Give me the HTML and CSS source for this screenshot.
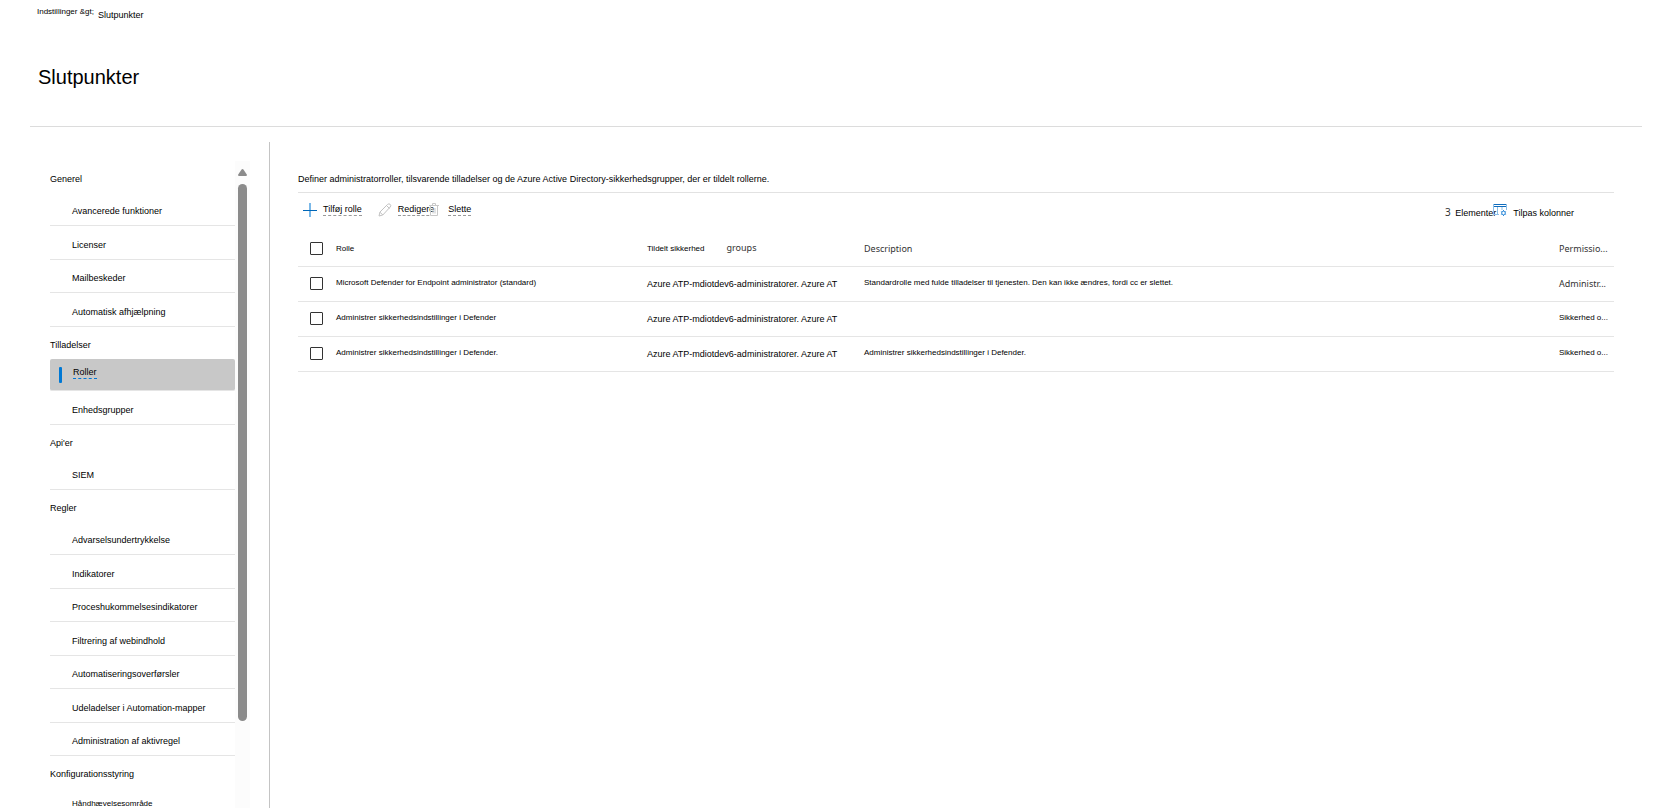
FILE: index.html
```html
<!DOCTYPE html>
<html lang="da">
<head>
    <meta charset="UTF-8">
    <meta name="viewport" content="width=device-width, initial-scale=1.0">
    <title>Slutpunkter</title>
    <link rel="stylesheet" href="styles.css">
</head>
<body>
<header>
    <nav class="breadcrumb">
        <a href="#" class="small">Indstillinger &amp;gt;</a>
        <a href="#">Slutpunkter</a>
    </nav>
    <h1>Slutpunkter</h1>
</header>

<div class="layout">
    <aside>
        <nav class="menu">
            <h2>Generel</h2>
            <ul>
                <li><a href="#">Avancerede funktioner</a></li>
                <li><a href="#">Licenser</a></li>
                <li><a href="#">Mailbeskeder</a></li>
                <li><a href="#">Automatisk afhjælpning</a></li>
            </ul>
            <h2>Tilladelser</h2>
            <ul>
                <li class="active"><a href="#"><span>Roller</span></a></li>
                <li><a href="#">Enhedsgrupper</a></li>
            </ul>
            <h2>Api'er</h2>
            <ul>
                <li><a href="#">SIEM</a></li>
            </ul>
            <h2>Regler</h2>
            <ul>
                <li><a href="#">Advarselsundertrykkelse</a></li>
                <li><a href="#">Indikatorer</a></li>
                <li><a href="#">Proceshukommelsesindikatorer</a></li>
                <li><a href="#">Filtrering af webindhold</a></li>
                <li><a href="#">Automatiseringsoverførsler</a></li>
                <li><a href="#">Udeladelser i Automation-mapper</a></li>
                <li><a href="#">Administration af aktivregel</a></li>
            </ul>
            <h2>Konfigurationsstyring</h2>
            <ul>
                <li class="last"><a href="#" class="small">Håndhævelsesområde</a></li>
            </ul>
        </nav>
        <div class="scrollbar">
            <svg width="9" height="7" viewBox="0 0 9 7"><path d="M3.4 .8Q4.5-.6 5.6.8L8.8 5.6Q9.2 7 8 7H1Q-.2 7 .2 5.6Z" fill="#8b8b8b"/></svg>
            <div class="thumb"></div>
        </div>
    </aside>

    <main>
        <p class="intro">Definer administratorroller, tilsvarende tilladelser og de Azure Active Directory-sikkerhedsgrupper, der er tildelt rollerne.</p>

        <div class="toolbar">
            <button type="button" class="add">
                <svg width="14" height="14" viewBox="0 0 14 14"><path d="M7 0v14" stroke="#7ab8e8" stroke-width="2"/><path d="M0 7.500h14" stroke="#0067b8"/></svg>
                <span>Tilføj rolle</span>
            </button>
            <button type="button" class="edit">
                <svg width="14" height="14" viewBox="0 0 14 14" fill="none" stroke="#c2c2c2"><path d="M1 13l1-4 7.600-7.600q1.400-1.200 2.600 0t0 2.600L4.800 12ZM8.500 2.500l3 3M2 9.200l2.800 2.800"/></svg>
                <span>Redigere</span>
            </button>
            <button type="button" class="delete">
                <svg width="10" height="14" viewBox="0 0 10 14" fill="none" stroke="#c8c8c8"><path d="M0 2.500h10M3.500 2.500v-2h3v2M1.500 2.500v10h7v-10M4 5v5.500M6 5v5.500"/></svg>
                <span>Slette</span>
            </button>
            <div class="count"><span class="num">3</span> Elementer</div>
            <button type="button" class="columns">
                <svg width="14" height="13" viewBox="0 0 14 13" fill="none" stroke="#2b88d8"><path d="M0 .5h14M0 2.500h14" stroke="#0f6cbd"/><path d="M.5 0v11M13.500 0v6M4.500 3v8M9 3v3M0 10.500h6" stroke="#8cbfe8"/><circle cx="10.500" cy="9" r="1.800"/><path d="M10.500 6v1M10.500 11v1M7.900 7.500l.9.500M12.200 10l.9.500M7.900 10.500l.9-.5M12.200 8l.9-.5"/></svg>
                <span>Tilpas kolonner</span>
            </button>
        </div>

        <table>
            <thead>
                <tr>
                    <th class="check"><input type="checkbox" aria-label="Vælg alle"></th>
                    <th class="role small">Rolle</th>
                    <th class="groups"><span class="small">Tildelt sikkerhed</span><span class="noto">groups</span></th>
                    <th class="noto">Description</th>
                    <th class="perm noto">Permissio...</th>
                </tr>
            </thead>
            <tbody>
                <tr>
                    <td><input type="checkbox" aria-label="Vælg rolle 1"></td>
                    <td class="small">Microsoft Defender for Endpoint administrator (standard)</td>
                    <td>Azure ATP-mdiotdev6-administratorer. Azure AT</td>
                    <td class="small">Standardrolle med fulde tilladelser til tjenesten. Den kan ikke ændres, fordi cc er slettet.</td>
                    <td class="noto">Administr...</td>
                </tr>
                <tr>
                    <td><input type="checkbox" aria-label="Vælg rolle 2"></td>
                    <td class="small">Administrer sikkerhedsindstillinger i Defender</td>
                    <td>Azure ATP-mdiotdev6-administratorer. Azure AT</td>
                    <td></td>
                    <td class="small">Sikkerhed o...</td>
                </tr>
                <tr>
                    <td><input type="checkbox" aria-label="Vælg rolle 3"></td>
                    <td class="small">Administrer sikkerhedsindstillinger i Defender.</td>
                    <td>Azure ATP-mdiotdev6-administratorer. Azure AT</td>
                    <td class="small">Administrer sikkerhedsindstillinger i Defender.</td>
                    <td class="small">Sikkerhed o...</td>
                </tr>
            </tbody>
        </table>
    </main>
</div>
</body>
</html>
```
FILE: styles.css
```css
* {
    box-sizing: border-box;
}
body {
    margin: 0;
    height: 100vh;
    display: flex;
    flex-direction: column;
    overflow: hidden;
    background: white;
    color: black;
    font-family: "Liberation Sans", Arial, sans-serif;
    font-size: 9px;
    line-height: 12px;
}
a {
    color: inherit;
    text-decoration: none;
}
.small {
    font-size: 8px;
}
.noto {
    font-family: "Noto Sans", sans-serif;
    font-size: 9px;
    color: #333;
}
header {
    margin: 0 19px 0 30px;
    padding: 6px 8px 36px 7px;
    border-bottom: 1px solid #dcdcdc;
}
.breadcrumb {
    display: flex;
    gap: 4px;
}
.breadcrumb a:last-child {
    margin-top: 3px;
}
h1 {
    margin: 43px 0 0 1px;
    font-size: 20px;
    font-weight: normal;
    line-height: 26px;
}
.layout {
    flex: 1;
    display: flex;
    min-height: 0;
    padding-top: 15px;
}

/* left menu */
aside {
    display: flex;
    width: 270px;
    padding: 19px 19px 0 50px;
    border-right: 1px solid #c4c4c4;
    overflow: hidden;
}
.menu {
    flex: 1;
}
.menu h2 {
    margin: 0;
    padding: 12px 0 8px;
    font-size: 9px;
    font-weight: normal;
}
.menu ul {
    margin: 0;
    padding: 0;
    list-style: none;
}
.menu li {
    border-bottom: 1px solid #e5e5e5;
}
.menu li a {
    display: block;
    padding: 12px 0 8px 22px;
}
.menu li:nth-child(even) a {
    padding-top: 13px;
}
.menu .active {
    background: #c8c8c8;
    border-radius: 2px;
}
.menu .active a {
    display: flex;
    align-items: flex-start;
    gap: 11px;
    padding: 8px 0 7px 9px;
}
.active a::before {
    content: "";
    width: 3px;
    height: 16px;
    background: #0078d4;
    border-radius: 1px;
}
.active span {
    line-height: 11px;
    border-bottom: 1px dashed #0078d4;
}
.menu .last a {
    padding-top: 10px;
}
.scrollbar {
    width: 15px;
    padding-top: 8px;
    background: #fcfcfc;
    text-align: center;
}
.scrollbar svg {
    display: block;
    margin: 0 auto 8px;
}
.thumb {
    width: 9px;
    height: 84%;
    margin: 0 auto;
    background: #8b8b8b;
    border-radius: 5px;
}

/* roles */
main {
    flex: 1;
    padding: 31px 47px 0 28px;
}
.intro {
    margin: 0;
    padding-bottom: 7px;
    border-bottom: 1px solid #e2e2e2;
}
.toolbar {
    display: flex;
    align-items: center;
    height: 39px;
    padding: 0 40px 5px 5px;
}
button {
    display: flex;
    align-items: center;
    gap: 6px;
    padding: 0;
    border: none;
    background: none;
    color: black;
    font: inherit;
    cursor: pointer;
}
.add span, .edit span, .delete span {
    line-height: 11px;
    border-bottom: 1px dashed #999;
}
.edit {
    margin-left: 16px;
}
.delete {
    gap: 9px;
    margin-left: -5px;
}
.count {
    margin-left: auto;
    padding-top: 4px;
}
.num {
    margin-right: 2px;
    font-family: "Noto Sans", sans-serif;
    font-size: 10px;
    color: #333;
}
.columns {
    margin-left: -3px;
}
.columns span {
    padding-top: 5px;
}
table {
    width: 100%;
    border-collapse: collapse;
    table-layout: fixed;
}
th, td {
    height: 35px;
    padding: 0;
    border-bottom: 1px solid #e5e5e5;
    text-align: left;
    font-weight: normal;
    white-space: nowrap;
}
th {
    height: 34px;
}
td.small {
    padding-bottom: 2px;
}
.check {
    width: 38px;
}
.role {
    width: 311px;
}
.groups {
    width: 217px;
}
.groups .noto {
    margin-left: 22px;
}
.perm {
    width: 55px;
}
input[type="checkbox"] {
    appearance: none;
    display: block;
    width: 13px;
    height: 13px;
    margin: 0 0 0 12px;
    border: 1px solid #333;
    border-radius: 1px;
}
input[type="checkbox"]:checked {
    background: #0078d4;
}
```
